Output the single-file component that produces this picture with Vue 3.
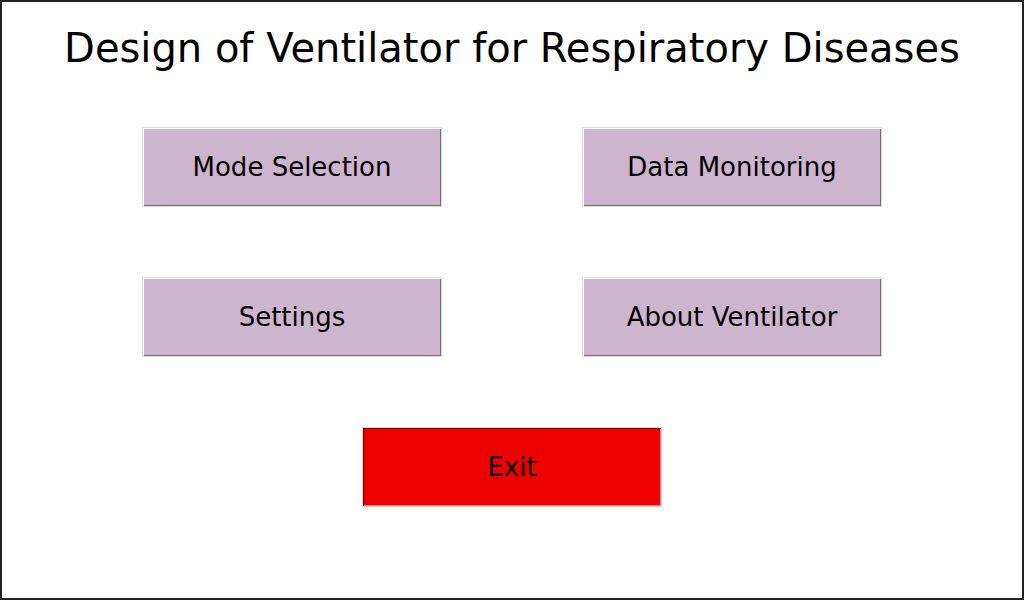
<script setup>
const actions = ['Mode Selection', 'Data Monitoring', 'Settings', 'About Ventilator']
</script>

<template>
  <main class="window">
    <h1 class="title">Design of Ventilator for Respiratory Diseases</h1>
    <div class="menu">
      <button v-for="action in actions" :key="action" type="button" class="button">{{ action }}</button>
    </div>
    <button type="button" class="button exit">Exit</button>
  </main>
</template>

<style>
body {
  margin: 0;
}
</style>

<style scoped>
.window {
  box-sizing: border-box;
  display: flex;
  flex-direction: column;
  align-items: center;
  min-height: 100vh;
  padding: 22px 16px;
  border: 2px solid #232325;
  background: #fff;
  color: #000;
  font-family: "DejaVu Sans", sans-serif;
}

.title {
  margin: 0;
  font-size: 40px;
  font-weight: 400;
  line-height: 48px;
  text-align: center;
}

.menu {
  display: grid;
  grid-template-columns: repeat(2, 300px);
  gap: 70px 140px;
  margin: 55px 0 70px;
}

.button {
  box-sizing: border-box;
  width: 300px;
  height: 80px;
  padding: 0;
  border: 1px solid #d9d9d9;
  background: #cdb5cd;
  box-shadow: inset 1px 1px #fff, inset -1px -1px #7b6c7b;
  color: #000;
  font-family: inherit;
  font-size: 26px;
  line-height: 32px;
}

.exit {
  background: #ee0000;
  box-shadow: inset 1px 1px #770000, inset -1px -1px #ff7f7f;
}
</style>
